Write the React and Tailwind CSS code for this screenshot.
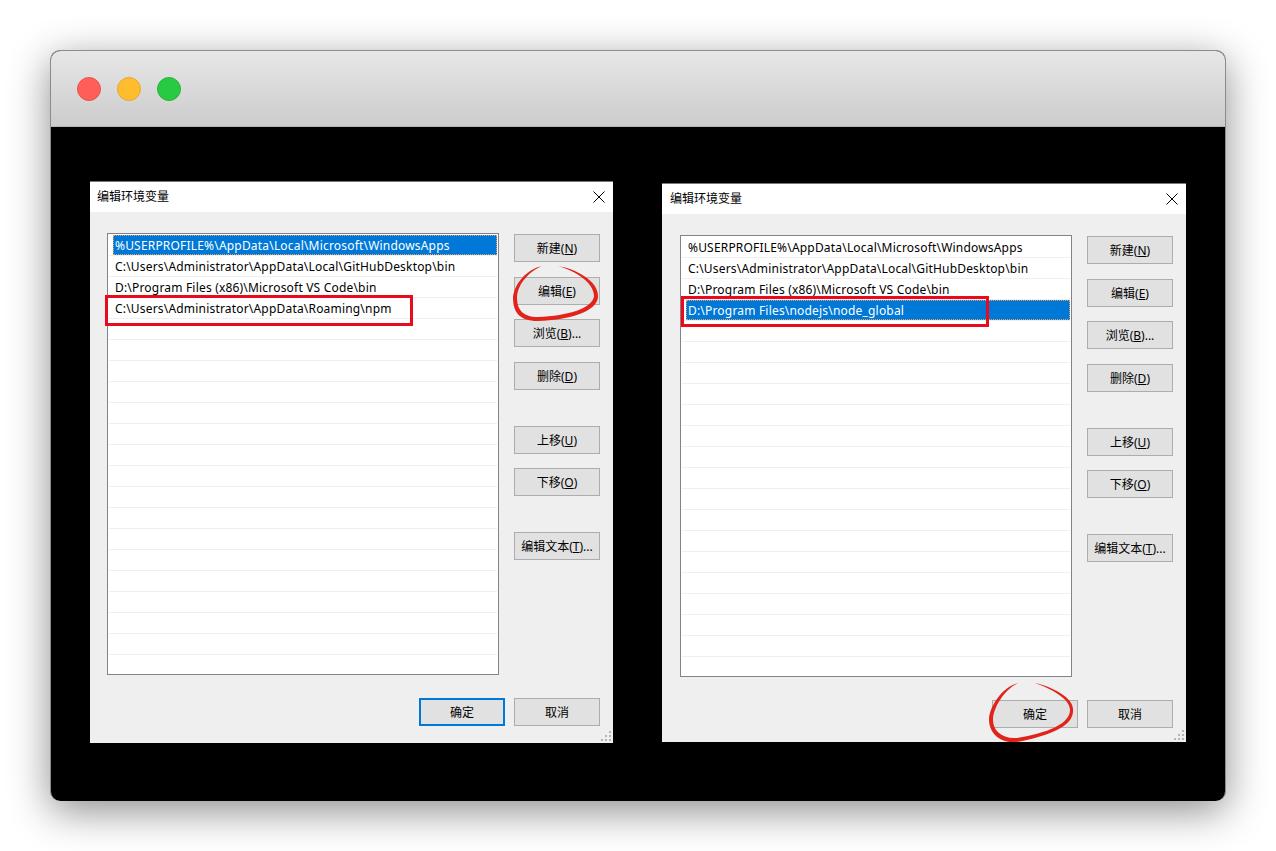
import React from "react";

const FONT = "[font-family:'Noto_Sans','Noto_Sans_CJK_SC',sans-serif]";

// ─── Button ───────────────────────────────────────────────────────────────────
function WinButton({ children, primary, className = "" }) {
  return (
    <div
      className={`w-[86px] h-[28px] shrink-0 flex items-center justify-center pt-[1px] bg-[#e1e1e1] text-[12px] text-black whitespace-nowrap ${
        primary ? "border-2 border-[#0078d7]" : "border border-[#adadad]"
      } ${className}`}
    >
      {children}
    </div>
  );
}

// ─── Path list ────────────────────────────────────────────────────────────────
function PathList({ paths, selected }) {
  const rows = Array.from({ length: 21 }, (_, i) => paths[i] ?? "");
  return (
    <div className="w-[392px] h-[442px] shrink-0 bg-white border border-[#82828c] pt-[1px] pl-[1px] pr-[1px] overflow-hidden">
      {rows.map((p, i) => (
        <div
          key={i}
          className="h-[21px] border-b border-[#efefef] flex pl-[4px] text-[12px] tracking-[0.19px] whitespace-nowrap"
        >
          <div
            className={`flex-1 h-[20px] pl-[1px] pt-[1px] leading-[18px] border border-dotted ${
              i === selected ? "bg-[#0078d7] text-white border-[#d9a36a]" : "text-black border-transparent"
            }`}
          >
            {p}
          </div>
        </div>
      ))}
    </div>
  );
}

// ─── Edit-variable dialog ─────────────────────────────────────────────────────
function EnvDialog({ paths, selected, okPrimary, className = "", bodyClass = "pl-[17px]", titleClass = "pl-[7px]", children }) {
  return (
    <div className={`relative shrink-0 bg-[#efefef] flex flex-col ${className}`}>
      <div className={`h-[31px] shrink-0 bg-white border-t border-[#777] flex items-center justify-between pr-[8px] text-[12px] text-black ${titleClass}`}>
        <span>编辑环境变量</span>
        <svg width="12" height="12" viewBox="0 0 12 12" className="text-black">
          <path d="M.5.5l11 11M11.5.5l-11 11" stroke="currentColor" strokeWidth="1" fill="none" />
        </svg>
      </div>
      <div className={`flex pt-[21px] ${bodyClass}`}>
        <PathList paths={paths} selected={selected} />
        <div className="ml-[15px] pt-[1px] flex flex-col">
          <WinButton>新建(<u>N</u>)</WinButton>
          <WinButton className="mt-[15px]">编辑(<u>E</u>)</WinButton>
          <WinButton className="mt-[14px]">浏览(<u>B</u>)...</WinButton>
          <WinButton className="mt-[15px]">删除(<u>D</u>)</WinButton>
          <WinButton className="mt-[36px]">上移(<u>U</u>)</WinButton>
          <WinButton className="mt-[14px]">下移(<u>O</u>)</WinButton>
          <WinButton className="mt-[36px]">编辑文本(<u>T</u>)...</WinButton>
        </div>
      </div>
      <div className="flex justify-end gap-[9px] pr-[13px] mt-[23px]">
        <WinButton primary={okPrimary}>确定</WinButton>
        <WinButton>取消</WinButton>
      </div>
      <svg width="11" height="11" viewBox="0 0 11 11" className="absolute right-[1px] bottom-[1px] text-[#b5b5b5]">
        <path d="M8 0h2v2H8zM4 4h2v2H4zM8 4h2v2H8zM0 8h2v2H0zM4 8h2v2H4zM8 8h2v2H8z" fill="currentColor" />
      </svg>
      {children}
    </div>
  );
}

const LEFT_PATHS = [
  "%USERPROFILE%\\AppData\\Local\\Microsoft\\WindowsApps",
  "C:\\Users\\Administrator\\AppData\\Local\\GitHubDesktop\\bin",
  "D:\\Program Files (x86)\\Microsoft VS Code\\bin",
  "C:\\Users\\Administrator\\AppData\\Roaming\\npm",
];

const RIGHT_PATHS = [
  "%USERPROFILE%\\AppData\\Local\\Microsoft\\WindowsApps",
  "C:\\Users\\Administrator\\AppData\\Local\\GitHubDesktop\\bin",
  "D:\\Program Files (x86)\\Microsoft VS Code\\bin",
  "D:\\Program Files\\nodejs\\node_global",
];

export default function App() {
  return (
    <div className={`w-[1276px] h-[851px] overflow-hidden bg-white pt-[50px] pl-[50px] ${FONT}`}>
      <div className="w-[1176px] h-[751px] rounded-[10px] overflow-hidden border border-[#8c8c8c] border-b-0 bg-black shadow-[0_10px_40px_rgba(0,0,0,0.45)] flex flex-col">
        {/* Title bar */}
        <div className="h-[76px] shrink-0 bg-gradient-to-b from-[#e7e7e7] to-[#cccccc] border-b border-[#b5b5b5] flex items-center gap-[16px] pl-[26px]">
          <div className="w-[24px] h-[24px] rounded-full bg-[#ff5f57] border border-[#e8524a]" />
          <div className="w-[24px] h-[24px] rounded-full bg-[#ffbd2e] border border-[#e5a73a]" />
          <div className="w-[24px] h-[24px] rounded-full bg-[#28ca41] border border-[#2bb13d]" />
        </div>

        {/* Screenshot body */}
        <div className="flex items-start pl-[39px]">
          <EnvDialog paths={LEFT_PATHS} selected={0} okPrimary className="w-[523px] h-[562px] mt-[54px]">
            <div className="absolute left-[15px] top-[114px] w-[308px] h-[31px] border-[3px] border-[#ea0a1e]" />
            <svg width="523" height="562" className="absolute left-0 top-0 pointer-events-none">
              <path
                d="M468 85 C486 88 509 100 508 116 C507 131 478 139 448 140 C428 140 423 130 423 116 C425 101 438 88 452 85 C440 90 428 102 427 116 C427 128 432 136 448 136 C478 135 503 127 504 115 C504 102 486 90 468 85Z"
                fill="#e2231a"
              />
            </svg>
          </EnvDialog>
          <EnvDialog
            paths={RIGHT_PATHS}
            selected={3}
            bodyClass="pl-[18px]"
            titleClass="pl-[8px]"
            className="w-[524px] h-[559px] mt-[56px] ml-[49px]"
          >
            <div className="absolute left-[19px] top-[113px] w-[308px] h-[31px] border-[3px] border-[#ea0a1e]" />
            <svg width="524" height="559" className="absolute left-0 top-0 pointer-events-none">
              <path
                d="M373 500 C391 504 412 515 411 527 C412 544 385 553 355 559 C337 561 327 549 327 537 C327 524 340 504 356 500 C342 507 331 525 331 537 C331 547 339 556 355 555 C385 550 408 541 408 527 C408 516 390 506 373 500Z"
                fill="#e2231a"
              />
            </svg>
          </EnvDialog>
        </div>
      </div>
    </div>
  );
}
